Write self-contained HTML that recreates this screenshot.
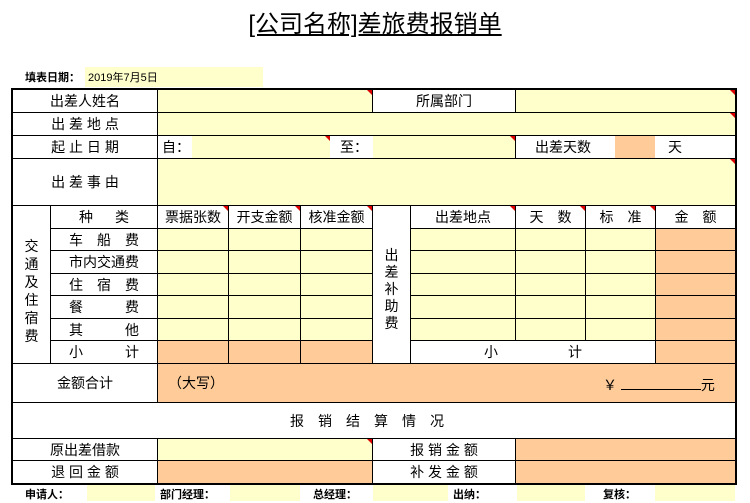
<!DOCTYPE html>
<html><head><meta charset="utf-8"><style>
body{margin:0;width:750px;height:501px;background:#fff;position:relative;overflow:hidden;font-family:"Liberation Sans","Noto Sans CJK SC",sans-serif;color:#000}
.c{position:absolute;box-sizing:border-box;border:1px solid #000;display:flex;align-items:center;justify-content:center;font-size:14px;white-space:nowrap}
.n{position:absolute;box-sizing:border-box}
.Y{background:#FFFFCC}.O{background:#FFCC99}
.j{justify-content:space-between;padding:0 18px}
.t{position:absolute;font-size:14px;line-height:16px;white-space:nowrap}
.b{font-weight:bold}
.r::after{content:"";position:absolute;right:0;top:0;border-top:5px solid #d00;border-left:5px solid transparent}
</style></head><body>
<div class="t" style="left:0;width:750px;top:10px;text-align:center;font-size:24px;line-height:30px"><span style="text-decoration:underline">[公司名称]差旅费报销单</span></div>
<div class="t b" style="left:25px;top:70px;font-size:11px">填表日期：</div>
<div class="n Y" style="left:85px;top:67px;width:178px;height:20px"></div>
<div class="t" style="left:88px;top:70px;font-size:11px">2019年7月5日</div>

<div class="c" style="left:12px;top:89px;width:146px;height:24px">出差人姓名</div>
<div class="c Y r" style="left:157px;top:89px;width:216px;height:24px"></div>
<div class="c" style="left:372px;top:89px;width:144px;height:24px">所属部门</div>
<div class="c Y r" style="left:515px;top:89px;width:221px;height:24px"></div>
<div class="c" style="left:12px;top:112px;width:146px;height:24px">出 差 地 点</div>
<div class="c Y r" style="left:157px;top:112px;width:579px;height:24px"></div>
<div class="c" style="left:12px;top:135px;width:146px;height:24px">起 止 日 期</div>
<div class="c" style="left:157px;top:135px;width:359px;height:24px"></div>
<div class="t" style="left:162px;top:139px">自：</div>
<div class="n Y r" style="left:192px;top:136px;width:138px;height:22px"></div>
<div class="t" style="left:340px;top:139px">至：</div>
<div class="n Y r" style="left:373px;top:136px;width:142px;height:22px"></div>
<div class="c" style="left:515px;top:135px;width:221px;height:24px"></div>
<div class="t" style="left:535px;top:139px">出差天数</div>
<div class="n O" style="left:615px;top:136px;width:40px;height:22px"></div>
<div class="t" style="left:668px;top:139px">天</div>
<div class="c" style="left:12px;top:158px;width:146px;height:48px">出 差 事 由</div>
<div class="c Y r" style="left:157px;top:158px;width:579px;height:48px"></div>

<div class="c" style="left:12px;top:205px;width:39px;height:159px;flex-direction:column;line-height:18px;padding-top:12px">交<br>通<br>及<br>住<br>宿<br>费</div>
<div class="c" style="left:372px;top:205px;width:39px;height:159px;flex-direction:column;line-height:17px;padding-top:10px">出<br>差<br>补<br>助<br>费</div>

<div class="c j" style="left:50px;top:205px;width:108px;height:24px;padding:0 28px">种<span>类</span></div>
<div class="c r" style="left:157px;top:205px;width:72px;height:24px">票据张数</div>
<div class="c r" style="left:228px;top:205px;width:73px;height:24px">开支金额</div>
<div class="c r" style="left:300px;top:205px;width:73px;height:24px">核准金额</div>
<div class="c r" style="left:410px;top:205px;width:106px;height:24px">出差地点</div>
<div class="c r" style="left:515px;top:205px;width:71px;height:24px">天　数</div>
<div class="c r" style="left:585px;top:205px;width:71px;height:24px">标　准</div>
<div class="c" style="left:655px;top:205px;width:81px;height:24px">金　额</div>

<div class="c j" style="left:50px;top:228px;width:108px;height:23px"><span>车</span><span>船</span><span>费</span></div>
<div class="c j" style="left:50px;top:250px;width:108px;height:24px;padding:0 18px">市内交通费</div>
<div class="c j" style="left:50px;top:273px;width:108px;height:23px"><span>住</span><span>宿</span><span>费</span></div>
<div class="c j" style="left:50px;top:295px;width:108px;height:24px"><span>餐</span><span>费</span></div>
<div class="c j" style="left:50px;top:318px;width:108px;height:23px"><span>其</span><span>他</span></div>
<div class="c j" style="left:50px;top:340px;width:108px;height:24px"><span>小</span><span>计</span></div>

<div class="c Y" style="left:157px;top:228px;width:72px;height:23px"></div><div class="c Y" style="left:228px;top:228px;width:73px;height:23px"></div><div class="c Y" style="left:300px;top:228px;width:73px;height:23px"></div>
<div class="c Y" style="left:157px;top:250px;width:72px;height:24px"></div><div class="c Y" style="left:228px;top:250px;width:73px;height:24px"></div><div class="c Y" style="left:300px;top:250px;width:73px;height:24px"></div>
<div class="c Y" style="left:157px;top:273px;width:72px;height:23px"></div><div class="c Y" style="left:228px;top:273px;width:73px;height:23px"></div><div class="c Y" style="left:300px;top:273px;width:73px;height:23px"></div>
<div class="c Y" style="left:157px;top:295px;width:72px;height:24px"></div><div class="c Y" style="left:228px;top:295px;width:73px;height:24px"></div><div class="c Y" style="left:300px;top:295px;width:73px;height:24px"></div>
<div class="c Y" style="left:157px;top:318px;width:72px;height:23px"></div><div class="c Y" style="left:228px;top:318px;width:73px;height:23px"></div><div class="c Y" style="left:300px;top:318px;width:73px;height:23px"></div>
<div class="c O" style="left:157px;top:340px;width:72px;height:24px"></div><div class="c O" style="left:228px;top:340px;width:73px;height:24px"></div><div class="c O" style="left:300px;top:340px;width:73px;height:24px"></div>
<div class="c Y" style="left:410px;top:228px;width:106px;height:23px"></div><div class="c Y" style="left:515px;top:228px;width:71px;height:23px"></div><div class="c Y" style="left:585px;top:228px;width:71px;height:23px"></div><div class="c O" style="left:655px;top:228px;width:81px;height:23px"></div>
<div class="c Y" style="left:410px;top:250px;width:106px;height:24px"></div><div class="c Y" style="left:515px;top:250px;width:71px;height:24px"></div><div class="c Y" style="left:585px;top:250px;width:71px;height:24px"></div><div class="c O" style="left:655px;top:250px;width:81px;height:24px"></div>
<div class="c Y" style="left:410px;top:273px;width:106px;height:23px"></div><div class="c Y" style="left:515px;top:273px;width:71px;height:23px"></div><div class="c Y" style="left:585px;top:273px;width:71px;height:23px"></div><div class="c O" style="left:655px;top:273px;width:81px;height:23px"></div>
<div class="c Y" style="left:410px;top:295px;width:106px;height:24px"></div><div class="c Y" style="left:515px;top:295px;width:71px;height:24px"></div><div class="c Y" style="left:585px;top:295px;width:71px;height:24px"></div><div class="c O" style="left:655px;top:295px;width:81px;height:24px"></div>
<div class="c Y" style="left:410px;top:318px;width:106px;height:23px"></div><div class="c Y" style="left:515px;top:318px;width:71px;height:23px"></div><div class="c Y" style="left:585px;top:318px;width:71px;height:23px"></div><div class="c O" style="left:655px;top:318px;width:81px;height:23px"></div>
<div class="c" style="left:410px;top:340px;width:246px;height:24px">小　　　　　计</div>
<div class="c O" style="left:655px;top:340px;width:81px;height:24px"></div>

<div class="c" style="left:12px;top:363px;width:146px;height:40px">金额合计</div>
<div class="c O" style="left:157px;top:363px;width:579px;height:40px"></div>
<div class="t" style="left:168px;top:375px">（大写）</div>
<div class="t" style="left:603px;top:375px">￥ <span style="display:inline-block;width:80px;border-bottom:1px solid #000;height:14px"></span>元</div>

<div class="c" style="left:12px;top:402px;width:724px;height:37px;letter-spacing:14px">报销结算情况</div>

<div class="c" style="left:12px;top:438px;width:146px;height:23px">原出差借款</div>
<div class="c Y r" style="left:157px;top:438px;width:216px;height:23px"></div>
<div class="c" style="left:372px;top:438px;width:144px;height:23px">报 销 金 额</div>
<div class="c O" style="left:515px;top:438px;width:221px;height:23px"></div>
<div class="c" style="left:12px;top:460px;width:146px;height:24px">退 回 金 额</div>
<div class="c O" style="left:157px;top:460px;width:216px;height:24px"></div>
<div class="c" style="left:372px;top:460px;width:144px;height:24px">补 发 金 额</div>
<div class="c O" style="left:515px;top:460px;width:221px;height:24px"></div>

<div class="n" style="left:11px;top:88px;width:726px;height:397px;border:2px solid #000"></div>

<div class="t b" style="left:25px;top:487px;font-size:11px">申请人：</div>
<div class="n Y" style="left:87px;top:485px;width:68px;height:16px"></div>
<div class="t b" style="left:160px;top:487px;font-size:11px">部门经理：</div>
<div class="n Y" style="left:230px;top:485px;width:70px;height:16px"></div>
<div class="t b" style="left:313px;top:487px;font-size:11px">总经理：</div>
<div class="n Y" style="left:373px;top:485px;width:75px;height:16px"></div>
<div class="t b" style="left:453px;top:487px;font-size:11px">出纳：</div>
<div class="n Y" style="left:517px;top:485px;width:68px;height:16px"></div>
<div class="t b" style="left:603px;top:487px;font-size:11px">复核：</div>
<div class="n Y" style="left:655px;top:485px;width:80px;height:16px"></div>
</body></html>
